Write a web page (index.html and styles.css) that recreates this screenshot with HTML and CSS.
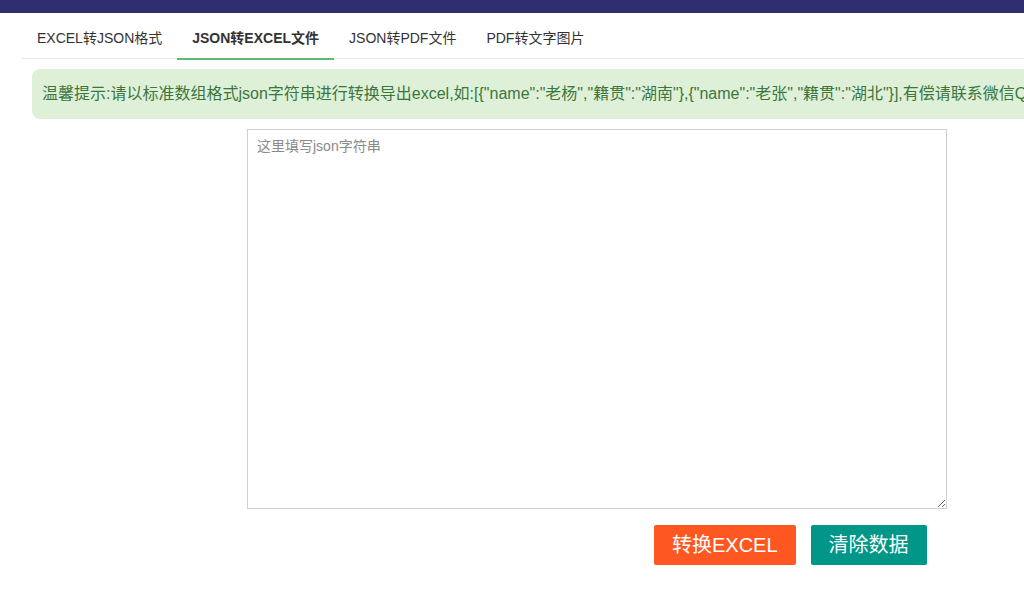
FILE: index.html
```html
<!DOCTYPE html>
<html lang="zh-CN">
<head>
<meta charset="utf-8">
<title>JSON转EXCEL文件</title>
<link rel="stylesheet" href="styles.css">
</head>
<body>
<div class="topbar"></div>
<ul class="tabs">
  <li class="tab">EXCEL转JSON格式</li>
  <li class="tab active">JSON转EXCEL文件</li>
  <li class="tab">JSON转PDF文件</li>
  <li class="tab">PDF转文字图片</li>
</ul>
<div class="content">
  <div class="alert">温馨提示:请以标准数组格式json字符串进行转换导出excel,如:[{"name":"老杨","籍贯":"湖南"},{"name":"老张","籍贯":"湖北"}],有偿请联系微信QQ</div>
  <div class="form">
    <textarea class="input" placeholder="这里填写json字符串"></textarea>
    <div class="actions">
      <button class="btn btn-orange" type="button">转换EXCEL</button>
      <button class="btn btn-teal" type="button">清除数据</button>
    </div>
  </div>
</div>
</body>
</html>
```
FILE: styles.css
```css
html, body {
  margin: 0;
  padding: 0;
  overflow: hidden;
  background: #fff;
  font-family: "Liberation Sans", "Noto Sans CJK SC", sans-serif;
  color: #333;
}

.topbar {
  height: 13px;
  background: #302e6e;
}

.tabs {
  display: flex;
  list-style: none;
  margin: 5px 0 0 22px;
  padding: 0;
  height: 40px;
  border-bottom: 1px solid #e6e6e6;
}

.tab {
  position: relative;
  padding: 0 15px;
  line-height: 40px;
  font-size: 14px;
  color: #333;
  white-space: nowrap;
}

.tab.active {
  font-weight: bold;
}

.tab.active::after {
  content: "";
  position: absolute;
  left: 0;
  right: 0;
  bottom: -2px;
  height: 2px;
  background: #5fb878;
}

.content {
  padding: 10px 0 0 32px;
}

.alert {
  display: inline-block;
  width: max-content;
  height: 50px;
  line-height: 50px;
  padding: 0 10px;
  border-radius: 8px;
  background: #dff0d8;
  color: #3c763d;
  font-size: 16px;
  white-space: nowrap;
}

.form {
  margin: 10px 0 0 215px;
  display: flex;
  flex-direction: column;
  align-items: flex-start;
}

.input {
  box-sizing: border-box;
  width: 700px;
  height: 380px;
  border: 1px solid #cfcfcf;
  padding: 6px 9px;
  font-family: "Liberation Sans", "Noto Sans CJK SC", sans-serif;
  font-size: 14px;
  line-height: 20px;
  color: #333;
  outline: none;
}

.input::placeholder {
  color: #8a8a8a;
}

.actions {
  display: flex;
  gap: 15px;
  margin: 16px 0 0 407px;
}

.btn {
  height: 40px;
  line-height: 40px;
  padding: 0 18px;
  border: none;
  border-radius: 2px;
  color: #fff;
  font-family: "Liberation Sans", "Noto Sans CJK SC", sans-serif;
  font-size: 20px;
  cursor: pointer;
}

.btn-orange {
  background: #ff5722;
}

.btn-teal {
  background: #009688;
}
```
